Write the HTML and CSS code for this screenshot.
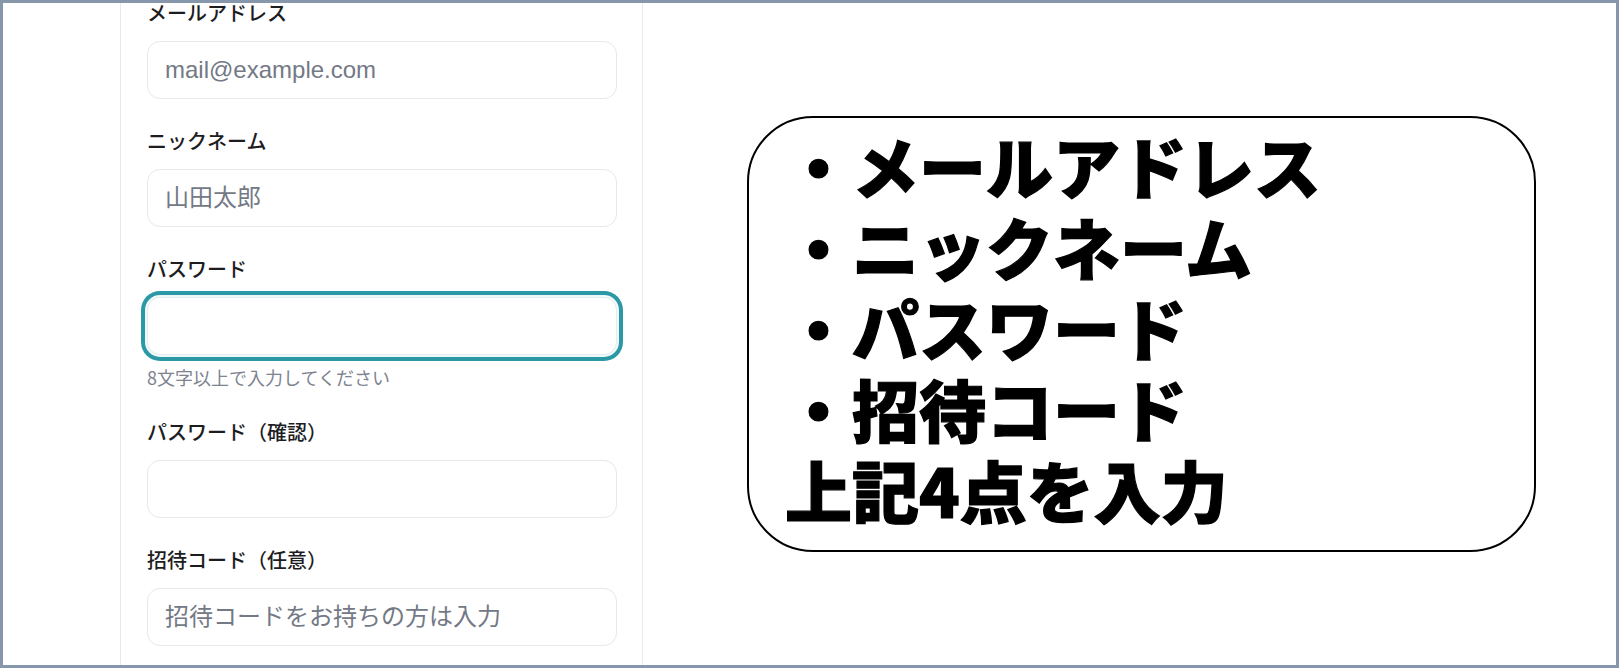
FILE: index.html
```html
<!DOCTYPE html>
<html lang="ja">
<head>
<meta charset="utf-8">
<title>新規登録</title>
<link rel="stylesheet" href="styles.css">
</head>
<body>
<div class="frame">
  <div class="row">
    <section class="card">
      <div class="field">
        <label class="label" for="email">メールアドレス</label>
        <input class="input latin" id="email" type="email" placeholder="mail@example.com">
      </div>
      <div class="field">
        <label class="label" for="nick">ニックネーム</label>
        <input class="input" id="nick" type="text" placeholder="山田太郎">
      </div>
      <div class="field">
        <label class="label" for="pw">パスワード</label>
        <input class="input input-focus" id="pw" type="password">
        <p class="hint">8文字以上で入力してください</p>
      </div>
      <div class="field">
        <label class="label" for="pw2">パスワード（確認）</label>
        <input class="input" id="pw2" type="password">
      </div>
      <div class="field">
        <label class="label" for="invite">招待コード（任意）</label>
        <input class="input" id="invite" type="text" placeholder="招待コードをお持ちの方は入力">
      </div>
    </section>
    <aside class="callout">
      <div class="callout-line">・メールアドレス</div>
      <div class="callout-line">・ニックネーム</div>
      <div class="callout-line">・パスワード</div>
      <div class="callout-line">・招待コード</div>
      <div class="callout-line">上記4点を入力</div>
    </aside>
  </div>
</div>
</body>
</html>
```

FILE: styles.css
```css
html, body {
  margin: 0;
  padding: 0;
  background: #ffffff;
}

body {
  font-family: "Noto Sans CJK JP", "Noto Sans", sans-serif;
  color: #1c1c1e;
}

.frame {
  box-sizing: border-box;
  width: 1619px;
  height: 668px;
  border: 3px solid #8697ab;
  background: #ffffff;
  overflow: hidden;
}

.row {
  display: flex;
  align-items: flex-start;
}

.card {
  box-sizing: border-box;
  flex: 0 0 523px;
  width: 523px;
  min-height: 900px;
  margin-left: 117px;
  margin-top: -39px;
  padding: 33px 25px 0 26px;
  border: 1px solid #e9eaec;
  border-radius: 18px;
  background: #ffffff;
}

.field {
  display: flex;
  flex-direction: column;
  margin-bottom: 27px;
}

.label {
  display: block;
  font-size: 20px;
  line-height: 30px;
  font-weight: 500;
  color: #1d1d1f;
  margin-bottom: 13px;
}

.input {
  box-sizing: border-box;
  display: block;
  width: 100%;
  height: 58px;
  margin: 0;
  padding: 0 17px;
  border: 1px solid #e7e8eb;
  border-radius: 13px;
  background: #ffffff;
  font-family: "Liberation Sans", "Noto Sans CJK JP", sans-serif;
  font-size: 24px;
  color: #1d1d1f;
  outline: none;
}

.input::placeholder {
  color: #737985;
  opacity: 1;
}

.input-focus {
  border-color: #e3eef0;
  box-shadow: 0 0 0 2px #f1f8f9, 0 0 0 6px #2b98a6;
}

.hint {
  margin: 10px 0 0;
  font-size: 18px;
  line-height: 25px;
  color: #7d838f;
}

.callout {
  box-sizing: border-box;
  flex: 0 0 789px;
  width: 789px;
  height: 436px;
  margin-left: 104px;
  margin-top: 113px;
  padding: 6px 20px 0 36px;
  border: 2.5px solid #000000;
  border-radius: 66px;
  background: #ffffff;
}

.callout-line {
  font-family: "Noto Sans CJK JP", sans-serif;
  font-size: 67px;
  line-height: 81px;
  font-weight: 900;
  color: #000000;
  -webkit-text-stroke: 1.2px #000000;
  white-space: nowrap;
}
```
